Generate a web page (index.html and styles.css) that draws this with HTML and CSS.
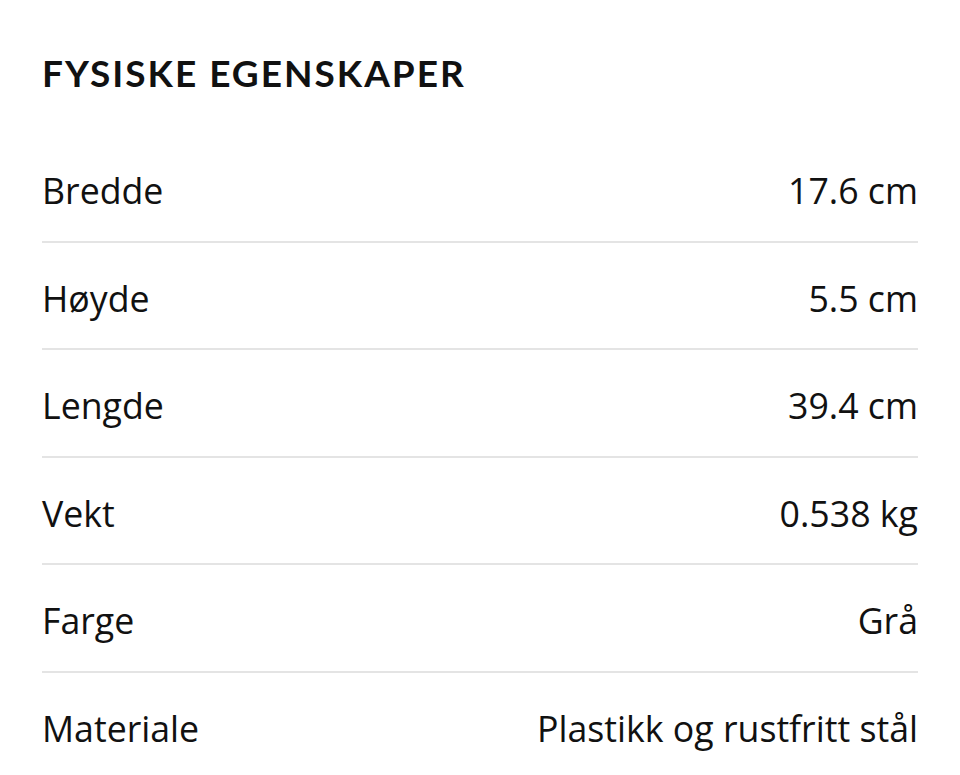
FILE: index.html
```html
<!DOCTYPE html>
<html lang="no">
<head>
<meta charset="utf-8">
<link rel="stylesheet" href="styles.css">
</head>
<body>
<section class="specs">
  <h2 class="specs-title">FYSISKE EGENSKAPER</h2>
  <dl class="spec-list">
    <div class="spec-row"><dt>Bredde</dt><dd>17.6 cm</dd></div>
    <div class="spec-row"><dt>Høyde</dt><dd>5.5 cm</dd></div>
    <div class="spec-row"><dt>Lengde</dt><dd>39.4 cm</dd></div>
    <div class="spec-row"><dt>Vekt</dt><dd>0.538 kg</dd></div>
    <div class="spec-row"><dt>Farge</dt><dd>Grå</dd></div>
    <div class="spec-row"><dt>Materiale</dt><dd>Plastikk og rustfritt stål</dd></div>
  </dl>
</section>
</body>
</html>
```
FILE: styles.css
```css
html, body {
  margin: 0;
  padding: 0;
  background: #fff;
}
body {
  font-family: "Open Sans", "Liberation Sans", sans-serif;
  color: #111;
}
.specs {
  padding: 48px 42px 0 42px;
}
.specs-title {
  margin: 0;
  font-family: Lato, "Open Sans", sans-serif;
  font-weight: 700;
  font-size: 37px;
  line-height: 50px;
  letter-spacing: 2px;
  color: #111;
}
.spec-list {
  margin: 37px 0 0 0;
  padding: 0;
}
.spec-row {
  display: flex;
  justify-content: space-between;
  align-items: center;
  padding: 31px 0 26.5px 0;
  border-bottom: 2px solid #e4e4e4;
}
.spec-row:last-child {
  border-bottom: none;
}
.spec-row dt,
.spec-row dd {
  margin: 0;
  font-size: 35.7px;
  line-height: 48px;
}
```
